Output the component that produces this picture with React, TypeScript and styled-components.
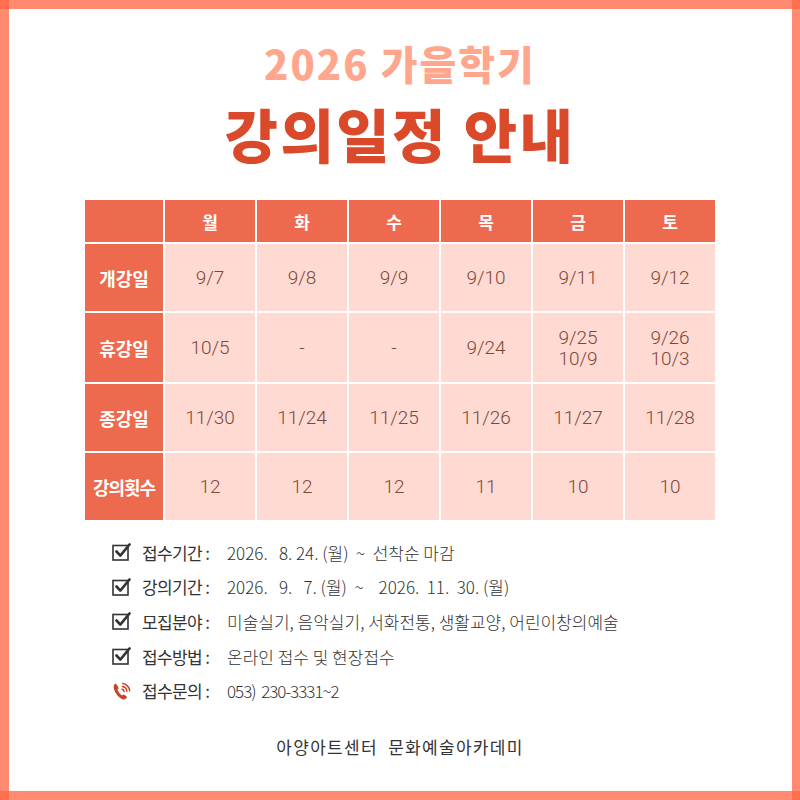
import React from "react";
import styled, { createGlobalStyle } from "styled-components";

const Global = createGlobalStyle`
  html, body { margin: 0; padding: 0; background: #fff; }
  * { box-sizing: border-box; }
`;

const BAR = "rgba(255,103,69,0.77)";

const Page = styled.div`
  width: 800px;
  height: 800px;
  font-family: "Noto Sans CJK KR", "Noto Sans", sans-serif;
  background-color: #fff;
  background-image:
    linear-gradient(${BAR}, ${BAR}),
    linear-gradient(${BAR}, ${BAR}),
    linear-gradient(${BAR}, ${BAR}),
    linear-gradient(${BAR}, ${BAR});
  background-repeat: no-repeat;
  background-size: 100% 9px, 100% 9px, 9px 100%, 8px 100%;
  background-position: 0 0, 0 100%, 0 0, 100% 0;
  display: flex;
  flex-direction: column;
  align-items: center;
  padding-top: 41px;
`;

const SubTitle = styled.div`
  font-size: 40px;
  line-height: 44px;
  font-weight: 900;
  color: #ffa68d;
  letter-spacing: 2px;
`;

const MainTitle = styled.div`
  margin-top: 15px;
  font-size: 58px;
  line-height: 66px;
  font-weight: 900;
  color: #d9492a;
  letter-spacing: 2.5px;
`;

const Table = styled.div`
  margin-top: 34px;
  width: 630px;
  display: grid;
  grid-template-columns: 78px repeat(6, 1fr);
  grid-template-rows: 42px 67px 69px 67px 67px;
  gap: 2px;
  background: #fff;
`;

const HeadCell = styled.div`
  background: #ee6a4e;
  color: #fff;
  display: flex;
  align-items: center;
  justify-content: center;
  font-size: 17px;
  font-weight: 700;
`;

const LabelCell = styled(HeadCell)<{ $tight?: boolean }>`
  font-size: 18px;
  letter-spacing: ${(p) => (p.$tight ? "-1px" : "0")};
`;

const Cell = styled.div`
  background: #ffdad2;
  color: #7f473a;
  display: flex;
  flex-direction: column;
  align-items: center;
  justify-content: center;
  font-family: Roboto, "Noto Sans CJK KR", sans-serif;
  font-weight: 300;
  font-size: 19px;
  line-height: 21px;
`;

const List = styled.div`
  margin-top: 15px;
  width: 630px;
  padding-left: 27px;
  display: flex;
  flex-direction: column;
`;

const Item = styled.div`
  height: 34.6px;
  display: flex;
  align-items: center;
  color: #333;
  font-size: 17px;
`;

const IconBox = styled.span`
  width: 30px;
  display: flex;
  align-items: center;
`;

const Label = styled.span`
  width: 85px;
  letter-spacing: -0.6px;
  white-space: pre;
`;

const Value = styled.span<{ $numeric?: boolean }>`
  white-space: pre;
  letter-spacing: ${(p) => (p.$numeric ? "-1px" : "0")};
  font-weight: 300;
  color: #333;
`;

const Footer = styled.div`
  margin-top: 27px;
  font-size: 17px;
  line-height: 24px;
  color: #333;
  white-space: pre;
  letter-spacing: 1.3px;
`;

const Check = () => (
  <svg width="19" height="18" viewBox="0 0 19 18">
    <rect x="1" y="2.5" width="15" height="14.5" fill="none" stroke="#333" strokeWidth="1.6" />
    <path d="M4.5 8.5 L8.3 12.6 L17.5 1.5" fill="none" stroke="#333" strokeWidth="2.6" strokeLinecap="round" strokeLinejoin="round" />
  </svg>
);

const Phone = () => (
  <svg width="20" height="20" viewBox="0 0 20 20">
    <path
      d="M3.2 2.6 C2.2 3.4 1.6 4.6 1.7 6.2 C2 10.5 5.5 15.6 10 18 C11.5 18.8 12.9 18.6 13.9 17.6 L14.7 16.8 C15.1 16.4 15.1 15.8 14.6 15.4 L12.3 13.7 C11.9 13.4 11.3 13.4 11 13.8 L10.2 14.6 C8.1 13.4 6.3 11 5.4 8.6 L6.3 7.9 C6.7 7.6 6.8 7 6.5 6.6 L5 4.1 C4.6 3.5 3.9 3.1 3.2 2.6 Z"
      fill="#c9432a"
    />
    <path d="M10 8.2 A2.3 2.3 0 0 1 12 10.6" fill="none" stroke="#c9432a" strokeWidth="1.5" strokeLinecap="round" />
    <path d="M10.3 5.4 A5 5 0 0 1 14.8 10.2" fill="none" stroke="#c9432a" strokeWidth="1.5" strokeLinecap="round" />
    <path d="M10.6 2.6 A7.6 7.6 0 0 1 17.6 9.8" fill="none" stroke="#c9432a" strokeWidth="1.5" strokeLinecap="round" />
  </svg>
);

const days = ["월", "화", "수", "목", "금", "토"];
const rows: { label: string; tight?: boolean; values: string[][] }[] = [
  { label: "개강일", values: [["9/7"], ["9/8"], ["9/9"], ["9/10"], ["9/11"], ["9/12"]] },
  { label: "휴강일", values: [["10/5"], ["-"], ["-"], ["9/24"], ["9/25", "10/9"], ["9/26", "10/3"]] },
  { label: "종강일", values: [["11/30"], ["11/24"], ["11/25"], ["11/26"], ["11/27"], ["11/28"]] },
  { label: "강의횟수", tight: true, values: [["12"], ["12"], ["12"], ["11"], ["10"], ["10"]] },
];

const info: { icon: "check" | "phone"; label: string; value: string; numeric?: boolean }[] = [
  { icon: "check", label: "접수기간 :", value: "2026.   8. 24. (월)  ~  선착순 마감" },
  { icon: "check", label: "강의기간 :", value: "2026.   9.   7. (월)  ~    2026.  11.  30. (월)" },
  { icon: "check", label: "모집분야 :", value: "미술실기, 음악실기, 서화전통, 생활교양, 어린이창의예술" },
  { icon: "check", label: "접수방법 :", value: "온라인 접수 및 현장접수" },
  { icon: "phone", label: "접수문의 :", value: "053)  230-3331~2", numeric: true },
];

export default function App() {
  return (
    <>
      <Global />
      <Page>
        <SubTitle>2026 가을학기</SubTitle>
        <MainTitle>강의일정 안내</MainTitle>
        <Table>
          <HeadCell />
          {days.map((d) => (
            <HeadCell key={d}>{d}</HeadCell>
          ))}
          {rows.map((r) => (
            <React.Fragment key={r.label}>
              <LabelCell $tight={r.tight}>{r.label}</LabelCell>
              {r.values.map((v, i) => (
                <Cell key={i}>
                  {v.map((line, j) => (
                    <span key={j}>{line}</span>
                  ))}
                </Cell>
              ))}
            </React.Fragment>
          ))}
        </Table>
        <List>
          {info.map((it) => (
            <Item key={it.label}>
              <IconBox>{it.icon === "check" ? <Check /> : <Phone />}</IconBox>
              <Label>{it.label}</Label>
              <Value $numeric={it.numeric}>{it.value}</Value>
            </Item>
          ))}
        </List>
        <Footer>아양아트센터  문화예술아카데미</Footer>
      </Page>
    </>
  );
}
